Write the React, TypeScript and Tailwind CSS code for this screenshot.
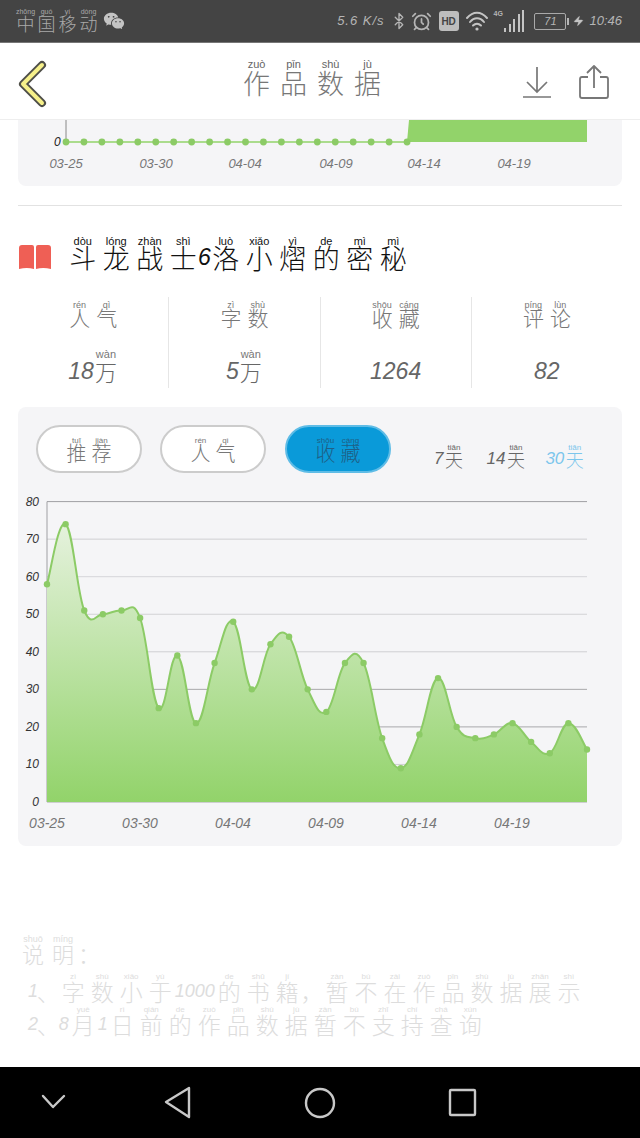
import React from "react";
import { RiWechatFill } from "react-icons/ri";
import { Bluetooth, AlarmClock, Zap } from "lucide-react";

function Py({ items, pitch, size, py, color, pyColor, pyH = 12, digit, digitW }: { items: string; pitch: number; size: number; py: number; color: string; pyColor?: string; pyH?: number; digit?: number; digitW?: number }) {
  const cells = items.split(" ").map((t) => t.split("|"));
  return (
    <div className="flex items-end [font-family:'Noto_Sans_CJK_SC','Liberation_Sans',sans-serif] font-light">
      {cells.map(([c, p], i) => {
        const isDigit = /[0-9]/.test(c);
        const isPunct = c === "、" || c === "，";
        const width = p ? pitch : isPunct ? size * 0.9 : isDigit ? digitW : undefined;
        return (
          <div key={i} className="flex flex-col items-center" style={{ width }}>
            <span className="whitespace-nowrap [font-family:'Liberation_Sans',sans-serif]" style={{ fontSize: py, height: pyH, lineHeight: `${pyH}px`, color: pyColor ?? color }}>{p || "\u00a0"}</span>
            <span className={isDigit ? "whitespace-nowrap italic [font-family:'Liberation_Sans',sans-serif]" : "whitespace-nowrap"} style={{ fontSize: isDigit && digit ? digit : size, height: size, lineHeight: `${size}px`, color }}>{c}</span>
          </div>
        );
      })}
    </div>
  );
}

function StatusBar() {
  return (
    <div className="h-[43px] shrink-0 bg-[#444444] border-b border-b-[#777777] flex items-center pl-[15px] pr-[18px] text-[#b5b5b5]">
      <Py items="中|zhōng 国|guó 移|yí 动|dòng" pitch={21} size={18} py={7} pyH={4} color="#a9a9a9" />
      <RiWechatFill className="w-[22px] h-[22px] text-[#c4c4c4] ml-[4px]" />
      <div className="ml-auto flex items-center text-[#b5b5b5]">
        <span className="text-[13px] italic [font-family:'Liberation_Sans',sans-serif] tracking-[1px]">5.6 K/s</span>
        <Bluetooth className="w-[18px] h-[20px] ml-[5px]" strokeWidth={1.8} />
        <AlarmClock className="w-[21px] h-[21px] ml-[3px]" strokeWidth={2} />
        <span className="ml-[7px] w-[20px] h-[20px] rounded-[3px] bg-[#bdbdbd] text-[#444444] text-[10px] font-bold flex items-center justify-center [font-family:'Liberation_Sans',sans-serif]">HD</span>
        <svg width="24" height="22" viewBox="0 0 24 22" className="ml-[6px]" fill="none" stroke="#c4c4c4" strokeWidth="2" strokeLinecap="round">
          <path d="M2 8 C8 1 16 1 22 8" />
          <path d="M5 12 C9 7 15 7 19 12" />
          <path d="M8 15.5 C10.5 13 13.5 13 16 15.5" />
          <circle cx="12" cy="19" r="1.6" fill="#c4c4c4" stroke="none" />
        </svg>
        <div className="ml-[5px] flex items-end gap-[2.5px] h-[22px]">
          <span className="text-[7px] font-bold leading-[8px] self-start mr-[-1px] [font-family:'Liberation_Sans',sans-serif]">4G</span>
          <i className="block w-[2px] h-[4px] bg-[#c4c4c4]" />
          <i className="block w-[2px] h-[8px] bg-[#c4c4c4]" />
          <i className="block w-[2px] h-[13px] bg-[#c4c4c4]" />
          <i className="block w-[2px] h-[18px] bg-[#c4c4c4]" />
          <i className="block w-[2px] h-[22px] bg-[#c4c4c4]" />
        </div>
        <div className="ml-[10px] w-[32px] h-[17px] border border-[#a9a9a9] rounded-[2px] flex items-center justify-center text-[11px] italic [font-family:'Liberation_Sans',sans-serif]">71</div>
        <i className="block ml-[1px] w-[2px] h-[7px] bg-[#b5b5b5]" />
        <Zap className="w-[11px] h-[16px] ml-[4px] fill-[#c4c4c4] text-[#c4c4c4]" strokeWidth={1} />
        <span className="ml-[5px] text-[13px] italic [font-family:'Liberation_Sans',sans-serif]">10:46</span>
      </div>
    </div>
  );
}

function Header() {
  return (
    <div className="h-[77px] shrink-0 bg-white border-b border-b-[#eeeeee] relative flex items-center justify-center">
      <svg width="32" height="48" viewBox="0 0 32 48" className="absolute left-[17px] top-[17px]" fill="none" strokeLinecap="round" strokeLinejoin="round">
        <path d="M25 5 L6 24 L25 43" stroke="#4f4f48" strokeWidth="8" />
        <path d="M25 5 L6 24 L25 43" stroke="#f6f08a" strokeWidth="4" />
      </svg>
      <div className="mt-[-6px] mr-[16px]">
        <Py items="作|zuò 品|pǐn 数|shù 据|jù" pitch={37} size={27} py={11} pyH={9} color="#777777" pyColor="#666666" />
      </div>
      <svg width="30" height="34" viewBox="0 0 30 34" className="absolute left-[522px] top-[22px]" fill="none" stroke="#777777" strokeWidth="1.7">
        <path d="M15 2 V27 M5 17 L15 27 L25 17 M1 32 H29" />
      </svg>
      <svg width="32" height="36" viewBox="0 0 32 36" className="absolute left-[578px] top-[21px]" fill="none" stroke="#777777" strokeWidth="1.8" strokeLinejoin="round">
        <path d="M10 13 H4 Q2 13 2 15 V32 Q2 34 4 34 H28 Q30 34 30 32 V15 Q30 13 28 13 H22 M16 24 V2 M9 9 L16 2 L23 9" />
      </svg>
    </div>
  );
}

const data = [58, 74, 51, 50, 51, 49, 25, 39, 21, 37, 48, 30, 42, 44, 30, 24, 37, 37, 17, 9, 18, 33, 20, 17, 18, 21, 16, 13, 21, 14];
const X0 = 29;
const STEP = 540 / 29;
const BASE = 310;
const UNIT = 3.755;
const pts = data.map((v, i) => [X0 + i * STEP, BASE - v * UNIT] as const);

function curve(): string {
  let d = `M${pts[0][0]} ${pts[0][1]}`;
  for (let i = 0; i < pts.length - 1; i++) {
    const p0 = pts[Math.max(i - 1, 0)];
    const p1 = pts[i];
    const p2 = pts[i + 1];
    const p3 = pts[Math.min(i + 2, pts.length - 1)];
    const k = 1 / 5;
    d += ` C${p1[0] + (p2[0] - p0[0]) * k} ${p1[1] + (p2[1] - p0[1]) * k} ${p2[0] - (p3[0] - p1[0]) * k} ${p2[1] - (p3[1] - p1[1]) * k} ${p2[0]} ${p2[1]}`;
  }
  return d;
}

const gridColors = ["#9f9fa3", "#cfcfd2", "#d6d6d9", "#d2d2d5", "#cfcfd2", "#a8a8ab", "#a8a8ab", "#cfcfd2", "#a8a8ab"];
const yLabels = [80, 70, 60, 50, 40, 30, 20, 10, 0];
const xLabels = [["03-25", 29], ["03-30", 122], ["04-04", 215], ["04-09", 308], ["04-14", 401], ["04-19", 494]] as const;
const labelFont = { fontFamily: "'Liberation Sans', sans-serif", fontStyle: "italic" } as const;

function MainChart() {
  const line = curve();
  const last = pts[pts.length - 1];
  return (
    <svg width="604" height="345" viewBox="0 0 604 345" className="block">
      <defs>
        <linearGradient id="area" x1="0" y1="30" x2="0" y2="310" gradientUnits="userSpaceOnUse">
          <stop offset="0" stopColor="#e6f2de" />
          <stop offset="1" stopColor="#92d36a" />
        </linearGradient>
      </defs>
      {yLabels.map((v, i) => (
        <g key={v}>
          <line x1="29" x2="569" y1={BASE - v * UNIT} y2={BASE - v * UNIT} stroke={gridColors[i]} strokeWidth="1" />
          <text x="21" y={BASE - v * UNIT + 4} textAnchor="end" fontSize="12" fill="#333333" style={labelFont}>{v}</text>
        </g>
      ))}
      <line x1="29" x2="29" y1={BASE - 80 * UNIT} y2={BASE} stroke="#9f9fa3" />
      <path d={`${line} L${last[0]} ${BASE} L${pts[0][0]} ${BASE} Z`} fill="url(#area)" />
      <path d={line} fill="none" stroke="#8ccb66" strokeWidth="2" />
      {pts.map(([x, y], i) => <circle key={i} cx={x} cy={y} r="3.2" fill="#8ccb66" />)}
      {xLabels.map(([t, x]) => (
        <text key={t} x={x} y={336} textAnchor="middle" fontSize="14" fill="#777777" style={labelFont}>{t}</text>
      ))}
    </svg>
  );
}

function TopCard() {
  const labels = [["03-25", 48], ["03-30", 138], ["04-04", 227], ["04-09", 318], ["04-14", 406], ["04-19", 496]] as const;
  return (
    <div className="mx-[18px] h-[66px] bg-[#f5f5f7] rounded-b-[8px] overflow-hidden">
      <svg width="604" height="66" viewBox="0 0 604 66" className="block">
        <line x1="48" x2="48" y1="0" y2="22" stroke="#888888" />
        <path d="M389 22 L391 0 H569 V22 Z" fill="#92d36a" />
        <line x1="48" x2="389" y1="22" y2="22" stroke="#92d36a" strokeWidth="1.5" />
        {Array.from({ length: 20 }, (_, i) => <circle key={i} cx={48 + i * 17.95} cy="22" r="3.4" fill="#8ccb66" />)}
        <text x="36" y="26" fontSize="12" fill="#222222" style={labelFont}>0</text>
        {labels.map(([t, x]) => (
          <text key={t} x={x} y="48" textAnchor="middle" fontSize="13" fill="#777777" style={labelFont}>{t}</text>
        ))}
      </svg>
    </div>
  );
}

function Stat({ label, value, last }: { label: string; value: string; last?: boolean }) {
  return (
    <div className={last ? "flex-1 h-[91px] pt-[7px] flex flex-col items-center justify-between" : "flex-1 h-[91px] pt-[7px] flex flex-col items-center justify-between border-r border-r-[#e6e6e6]"}>
      <Py items={label} pitch={27} size={21} py={9} pyH={3} color="#777777" />
      <div className="mb-[6px]">
        <Py items={value} pitch={24} size={22} py={11} pyH={11} digit={23} color="#666666" pyColor="#777777" />
      </div>
    </div>
  );
}

function Pill({ label, active }: { label: string; active?: boolean }) {
  return (
    <div className={active ? "w-[106px] h-[48px] pt-[2px] rounded-full bg-[#0a9ad9] border-2 border-[#5fbce6] flex items-center justify-center" : "w-[106px] h-[48px] pt-[2px] rounded-full bg-white border-2 border-[#cccccc] flex items-center justify-center"}>
      <Py items={label} pitch={25} size={20} py={8} pyH={5} color={active ? "#1f5f86" : "#777777"} />
    </div>
  );
}

function Nav() {
  return (
    <div className="h-[71px] shrink-0 bg-black flex items-center">
      <svg width="640" height="71" viewBox="0 0 640 71" fill="none" stroke="#c8c8c8" strokeWidth="2.4" strokeLinejoin="round" strokeLinecap="round">
        <path d="M43 29 L53 40 L64 29" />
        <path d="M189 21 L166 35 L189 50 Z" />
        <circle cx="320" cy="36" r="14" />
        <rect x="450" y="23" width="25" height="25" rx="1" />
      </svg>
    </div>
  );
}

export default function App() {
  return (
    <div className="w-[640px] h-[1138px] bg-white flex flex-col overflow-hidden">
      <StatusBar />
      <Header />
      <div className="flex-1 flex flex-col overflow-hidden">
        <TopCard />
        <div className="mx-[18px] mt-[19px] border-t border-t-[#e2e2e2]" />
        <div className="mt-[33px] ml-[18px] flex items-end">
          <svg width="34" height="26" viewBox="0 0 34 26" className="mb-[1px]" fill="#ef5f55">
            <path d="M1 4 Q1 1 4 1 H14 Q16 1 16 3 V25 Q9 23 1 25 Z" />
            <path d="M33 4 Q33 1 30 1 H20 Q18 1 18 3 V25 Q25 23 33 25 Z" />
          </svg>
          <div className="ml-[14px]">
            <Py items="斗|dòu 龙|lóng 战|zhàn 士|shì 6| 洛|luò 小|xiǎo 熠|yì 的|de 密|mì 秘|mì" pitch={33.5} size={27} py={11} pyH={5} digit={23} digitW={9} color="#111111" />
          </div>
        </div>
        <div className="mx-[18px] mt-[26px] flex">
          <Stat label="人|rén 气|qì" value="18| 万|wàn" />
          <Stat label="字|zì 数|shù" value="5| 万|wàn" />
          <Stat label="收|shōu 藏|cáng" value="1264|" />
          <Stat label="评|píng 论|lùn" value="82|" last />
        </div>
        <div className="mx-[18px] mt-[19px] h-[439px] bg-[#f5f5f7] rounded-[8px] flex flex-col">
          <div className="mt-[18px] ml-[18px] flex items-center">
            <Pill label="推|tuī 荐|jiàn" />
            <div className="ml-[18px]"><Pill label="人|rén 气|qì" /></div>
            <div className="ml-[19px]"><Pill label="收|shōu 藏|cáng" active /></div>
            <div className="ml-[43px] mt-[15px]"><Py items="7| 天|tiān" pitch={21} size={18} py={8} pyH={5} digit={17} color="#666666" /></div>
            <div className="ml-[22px] mt-[15px]"><Py items="14| 天|tiān" pitch={21} size={18} py={8} pyH={5} digit={17} color="#666666" /></div>
            <div className="ml-[19px] mt-[15px]"><Py items="30| 天|tiān" pitch={21} size={18} py={8} pyH={5} digit={17} color="#7cc6ec" /></div>
          </div>
          <div className="mt-[19px]"><MainChart /></div>
        </div>
        <div className="mt-[90px] ml-[18px]">
          <Py items="说|shuō 明|míng ：|" pitch={30} size={22} py={9} pyH={6} color="#dddddd" />
        </div>
        <div className="mt-[10px] ml-[28px]">
          <Py items="1| 、| 字|zì 数|shù 小|xiǎo 于|yú 1000| 的|de 书|shū 籍|jí ，| 暂|zàn 不|bú 在|zài 作|zuò 品|pǐn 数|shù 据|jù 展|zhǎn 示|shì" pitch={29} size={23} py={8} pyH={6} digit={18} color="#dddddd" />
        </div>
        <div className="mt-[4px] ml-[28px]">
          <Py items="2| 、| 8| 月|yuè 1| 日|rì 前|qián 的|de 作|zuò 品|pǐn 数|shù 据|jù 暂|zàn 不|bú 支|zhī 持|chí 查|chá 询|xún" pitch={29} size={23} py={8} pyH={6} digit={18} color="#dddddd" />
        </div>
      </div>
      <Nav />
    </div>
  );
}
